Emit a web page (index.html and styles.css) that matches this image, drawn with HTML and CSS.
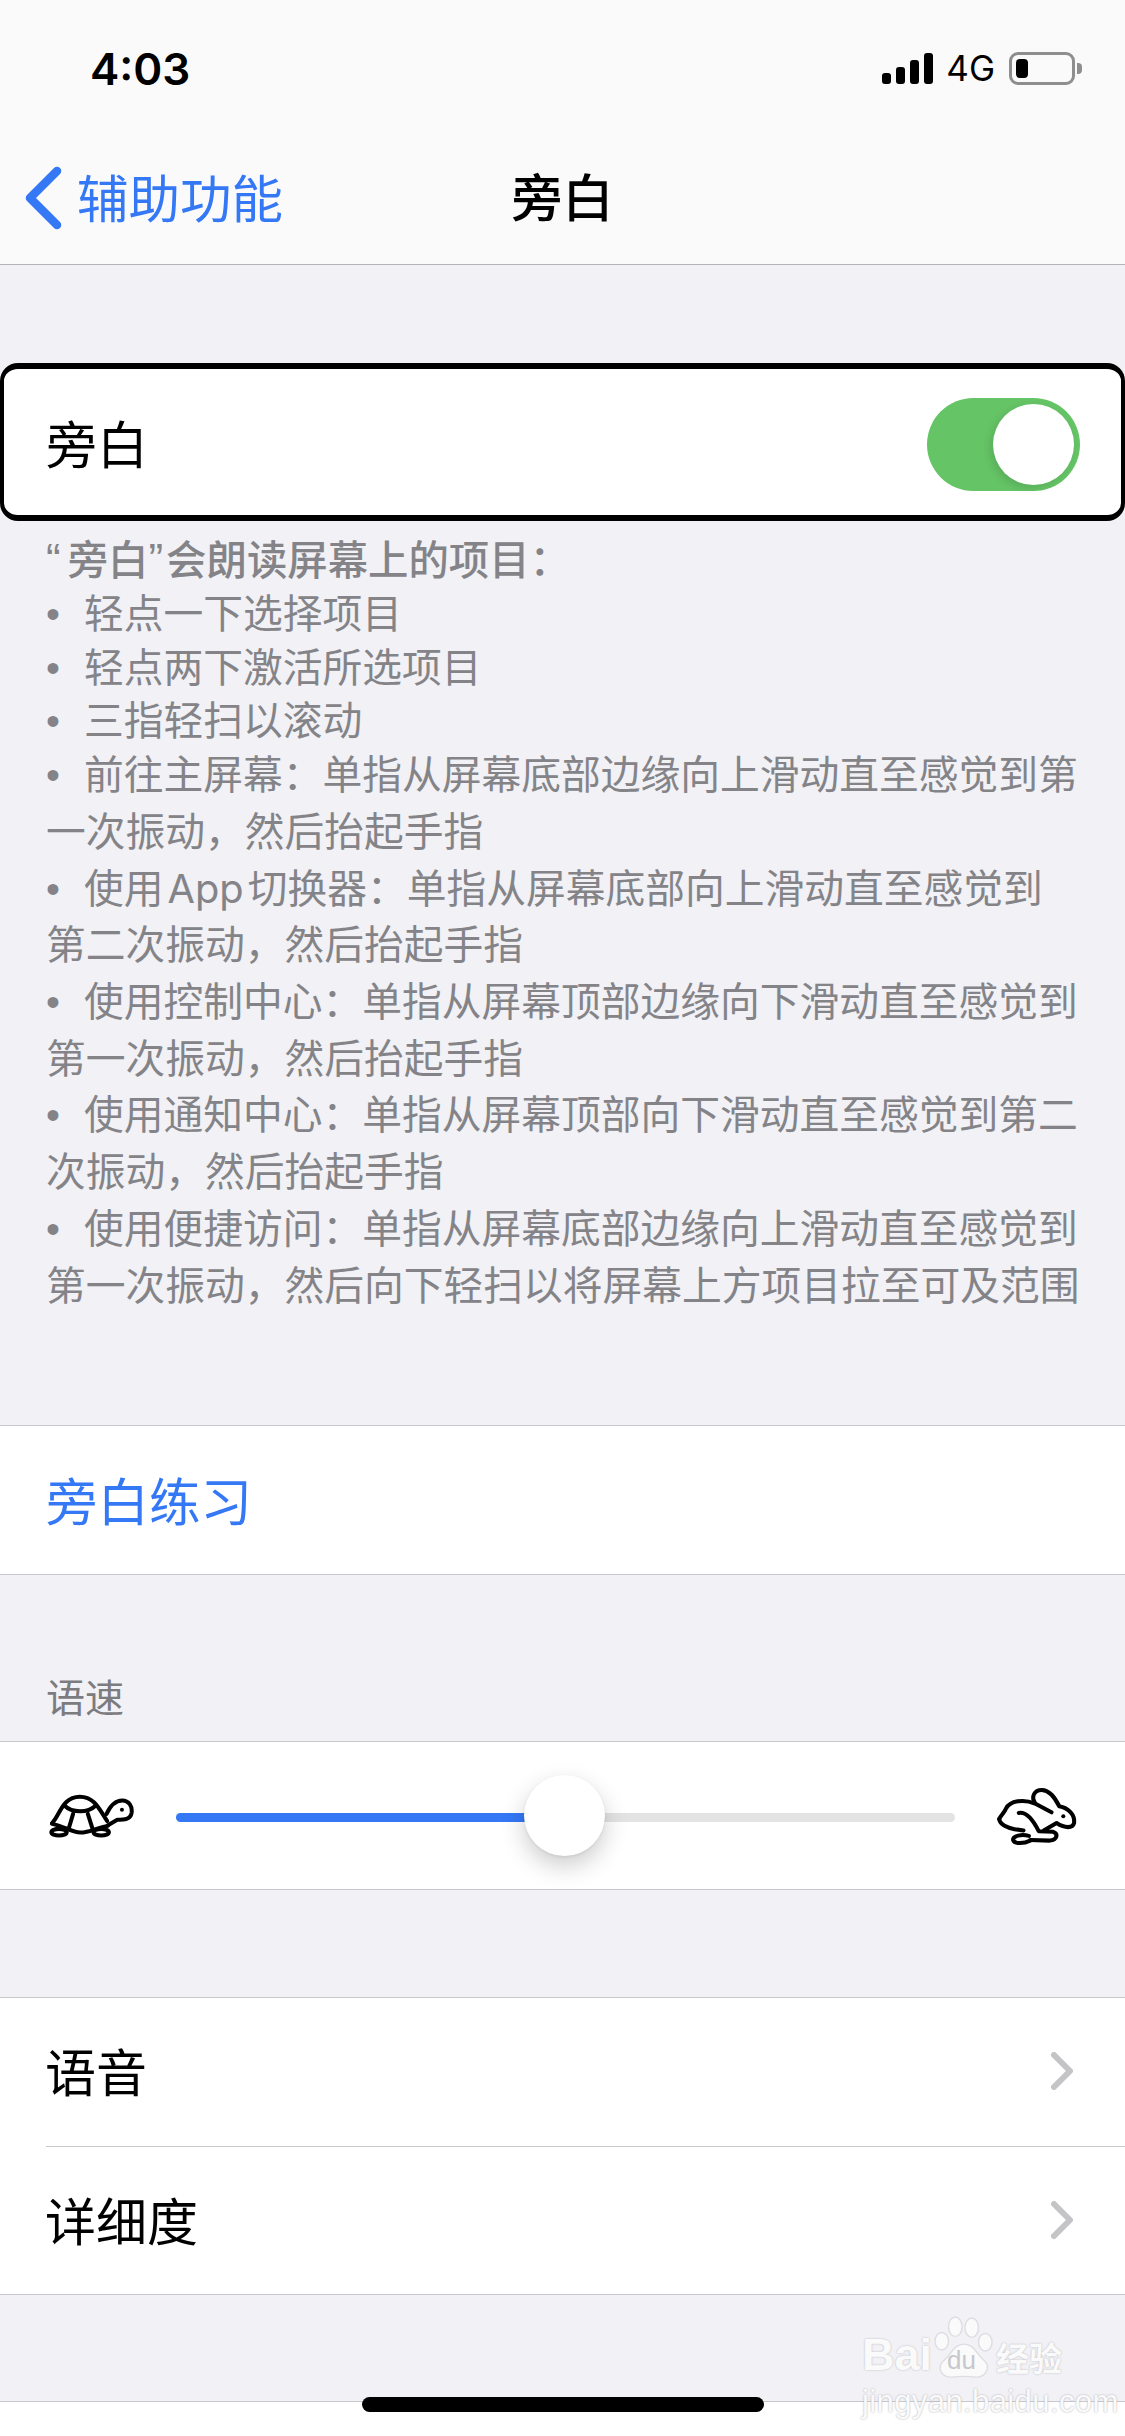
FILE: index.html
```html
<!DOCTYPE html>
<html lang="zh-CN">
<head>
<meta charset="UTF-8" />
<meta name="viewport" content="width=device-width, initial-scale=1.0" />
<title>旁白</title>
<link rel="stylesheet" href="styles.css">
</head>
<body>
<div id="screen">
  <div id="top-bar">
    <div id="status-bar">
      <span id="clock">4:03</span>
      <div id="status-icons">
        <svg id="signal" width="51" height="31" viewBox="0 0 51 31">
          <rect x="0" y="20" width="9" height="11" rx="3" />
          <rect x="14" y="14" width="9" height="17" rx="3" />
          <rect x="28" y="7" width="9" height="24" rx="3" />
          <rect x="42" y="0" width="9" height="31" rx="3" />
        </svg>
        <span id="network">4G</span>
        <div id="battery"><div id="battery-level"></div></div>
        <div id="battery-nub"></div>
      </div>
    </div>
    <div id="nav-bar">
      <div id="nav-back">
        <svg width="38" height="64" viewBox="0 0 38 64"><path d="M33 5 L6 32 L33 59" fill="none" stroke="#3478f6" stroke-width="8.5" stroke-linecap="round" stroke-linejoin="round" /></svg>
        <span>辅助功能</span>
      </div>
      <div id="nav-title">旁白</div>
    </div>
  </div>

  <div id="voice-row">
    <span>旁白</span>
    <div id="switch"><div id="switch-knob"></div></div>
  </div>

  <div id="desc">
    <p class="desc-head"><span class="quote quote-open">“</span>旁白<span class="quote quote-close">”</span>会朗读屏幕上的项目：</p>
    <p class="desc-line"><i>•</i>轻点一下选择项目</p>
    <p class="desc-line"><i>•</i>轻点两下激活所选项目</p>
    <p class="desc-line"><i>•</i>三指轻扫以滚动</p>
    <p class="desc-wrap"><i>•</i>前往主屏幕：单指从屏幕底部边缘向上滑动直至感觉到第<br>一次振动，然后抬起手指</p>
    <p class="desc-wrap"><i>•</i>使用<span class="latin">App</span>切换器：单指从屏幕底部向上滑动直至感觉到<br>第二次振动，然后抬起手指</p>
    <p class="desc-wrap"><i>•</i>使用控制中心：单指从屏幕顶部边缘向下滑动直至感觉到<br>第一次振动，然后抬起手指</p>
    <p class="desc-wrap"><i>•</i>使用通知中心：单指从屏幕顶部向下滑动直至感觉到第二<br>次振动，然后抬起手指</p>
    <p class="desc-wrap"><i>•</i>使用便捷访问：单指从屏幕底部边缘向上滑动直至感觉到<br>第一次振动，然后向下轻扫以将屏幕上方项目拉至可及范围</p>
  </div>

  <div id="practice-row" class="group">旁白练习</div>

  <div id="speed-label">语速</div>
  <div id="speed-row" class="group">
    <svg id="turtle" width="85" height="45" viewBox="146 163 254 134" fill="none" stroke="#000" stroke-width="12" stroke-linecap="round" stroke-linejoin="round">
      <path d="M155 250 C178 228 185 171 238 171 C282 171 296 208 320 244" />
      <path d="M155 252 C192 258 212 278 240 278 C270 278 290 262 322 258" />
      <path d="M192 197 C215 220 262 220 286 197" />
      <path d="M218 222 L205 266 M262 222 L276 266" />
      <ellipse cx="176" cy="277" rx="23" ry="10" />
      <ellipse cx="302" cy="277" rx="23" ry="10" />
      <path d="M318 222 C330 196 345 182 365 182 C385 182 395 200 393 218 C390 240 370 240 350 240 L322 256" />
      <circle cx="364" cy="210" r="6" fill="#000" stroke="none" />
    </svg>
    <div id="track">
      <div id="track-fill"></div>
      <div id="thumb"></div>
    </div>
    <svg id="rabbit" width="80" height="58" viewBox="114 86 236 172" fill="none" stroke="#000" stroke-width="12" stroke-linecap="round" stroke-linejoin="round">
      <path d="M120 178 C126 165 135 160 140 147 C152 124 192 118 226 132 L275 158" />
      <path d="M226 130 C214 112 224 92 246 92 C270 92 285 115 298 140 C325 145 345 165 342 190 C338 206 315 206 290 190 L252 212" />
      <path d="M120 178 C122 195 145 205 165 208 L192 212" />
      <path d="M178 160 C205 155 225 190 237 214 L280 216 C296 222 292 240 270 242 L212 240" />
      <path d="M208 228 C186 222 160 228 161 240 C165 254 195 250 212 242" />
      <circle cx="310" cy="170" r="6" fill="#000" stroke="none" />
    </svg>
  </div>

  <div id="list" class="group">
    <div class="list-row">
      <span>语音</span>
      <svg width="23" height="38" viewBox="0 0 23 38"><path d="M3 3 L19 19 L3 35" fill="none" stroke="#c4c4c7" stroke-width="6" stroke-linecap="round" stroke-linejoin="round" /></svg>
    </div>
    <div class="list-row">
      <span>详细度</span>
      <svg width="23" height="38" viewBox="0 0 23 38"><path d="M3 3 L19 19 L3 35" fill="none" stroke="#c4c4c7" stroke-width="6" stroke-linecap="round" stroke-linejoin="round" /></svg>
    </div>
  </div>

  <div id="bottom-strip"></div>
  <div id="home-bar"></div>

  <div id="watermark">
    <div id="wm-logo">
      <span>Bai</span>
      <div id="wm-paw">
        <svg width="60" height="64" viewBox="0 0 62 66" fill="#fafafb" stroke="#dedee2" stroke-width="1.5">
          <ellipse cx="8" cy="26" rx="7" ry="9" />
          <ellipse cx="22" cy="11" rx="7" ry="10" />
          <ellipse cx="39" cy="12" rx="7" ry="10" />
          <ellipse cx="53" cy="27" rx="7" ry="9" />
          <path d="M31 29 C42 29 44 40 52 46 C60 54 52 64 42 63 C34 62 28 62 20 63 C8 64 2 54 10 46 C18 40 20 29 31 29 Z" />
        </svg>
        <b>du</b>
      </div>
      <span id="wm-cn">经验</span>
    </div>
    <div id="wm-url">jingyan.baidu.com</div>
  </div>
</div>
</body>
</html>
```
FILE: styles.css
```css
* {
  box-sizing: border-box;
}

body {
  margin: 0;
  background: #f1f1f6;
  font-family: "Noto Sans CJK SC", "Noto Sans", sans-serif;
}

#screen {
  position: relative;
  width: 1125px;
  height: 2436px;
  overflow: hidden;
  display: flex;
  flex-direction: column;
}

#top-bar {
  height: 265px;
  background: #fafafb;
  border-bottom: 1px solid #b4b4b6;
}

#status-bar {
  height: 132px;
  display: flex;
  justify-content: space-between;
  align-items: flex-start;
  padding: 42px 43px 0 90px;
}

#clock {
  font-family: Inter, "Liberation Sans", sans-serif;
  font-size: 44px;
  font-weight: 600;
  line-height: 54px;
  color: #000;
}

#status-icons {
  display: flex;
  align-items: center;
  margin-top: 10px;
}

#signal {
  fill: #000;
  margin-right: -1px;
}

#network {
  font-family: Inter, "Liberation Sans", sans-serif;
  font-size: 35px;
  line-height: 33px;
  margin: 0 14px;
  color: #000;
}

#battery {
  width: 66px;
  height: 33px;
  padding: 4px;
  border: 3px solid #8e8e8e;
  border-radius: 9px;
}

#battery-level {
  width: 12px;
  height: 100%;
  background: #000;
  border-radius: 4px;
}

#battery-nub {
  width: 5px;
  height: 11px;
  margin-left: 2px;
  background: #8e8e8e;
  border-radius: 0 4px 4px 0;
}

#nav-bar {
  position: relative;
  height: 132px;
  display: flex;
  align-items: center;
  justify-content: center;
}

#nav-back {
  position: absolute;
  left: 24px;
  top: 34px;
  display: flex;
  align-items: center;
  gap: 15px;
  color: #3478f6;
  font-size: 51.5px;
  line-height: 64px;
}

#nav-back span {
  margin-top: -4px;
}

#nav-title {
  font-size: 51px;
  font-weight: 500;
  color: #000;
  margin-top: -7px;
}

#voice-row {
  height: 158px;
  margin-top: 98px;
  padding: 0 41px 0 42px;
  display: flex;
  align-items: center;
  justify-content: space-between;
  background: #fff;
  border: solid #000;
  border-width: 6px 4px;
  border-radius: 18px;
  font-size: 51px;
  color: #000;
}

#switch {
  width: 153px;
  height: 93px;
  margin-top: 4px;
  padding: 6px;
  display: flex;
  justify-content: flex-end;
  background: #65c466;
  border-radius: 47px;
}

#switch-knob {
  width: 81px;
  height: 81px;
  background: #fff;
  border-radius: 50%;
  box-shadow: -3px 3px 8px rgba(0, 0, 0, 0.12);
}

#desc {
  height: 904px;
  padding: 10px 0 0 46px;
  font-size: 39.75px;
  color: #848488;
  white-space: nowrap;
}

#desc p {
  margin: 0;
}

#desc i {
  display: inline-block;
  width: 38px;
  font-family: "Liberation Sans", sans-serif;
  font-style: normal;
  line-height: 1;
}

.desc-head {
  font-size: 40.4px;
  line-height: 53.3px;
  font-weight: 500;
}

.quote {
  font-family: "Liberation Sans", sans-serif;
  font-size: 44px;
  line-height: 1;
}

.quote-open {
  margin-right: 7px;
}

.quote-close {
  margin-right: 3px;
}

.latin {
  font-family: Inter, "Liberation Sans", sans-serif;
  line-height: 1;
  margin: 0 4px;
}

.desc-line {
  line-height: 53.3px;
}

.desc-wrap {
  line-height: 56.7px;
}

.group {
  background: #fff;
  border-top: 1px solid #c8c8cc;
  border-bottom: 1px solid #c8c8cc;
}

#practice-row {
  height: 150px;
  padding-left: 46px;
  font-size: 51.5px;
  line-height: 145px;
  color: #3478f6;
}

#speed-label {
  height: 166px;
  padding: 92px 0 0 46px;
  font-size: 39px;
  line-height: 56px;
  color: #7b7b80;
}

#speed-row {
  height: 149px;
  padding-left: 49px;
  display: flex;
  align-items: center;
}

#turtle {
  margin-top: 2px;
}

#track {
  position: relative;
  width: 779px;
  height: 9px;
  margin: 4px 43px 0 42px;
  background: #e3e3e3;
  border-radius: 5px;
}

#track-fill {
  width: 350px;
  height: 100%;
  background: #3478f6;
  border-radius: 5px 0 0 5px;
}

#thumb {
  position: absolute;
  left: 348px;
  top: -38px;
  width: 81px;
  height: 81px;
  background: #fff;
  border-radius: 50%;
  box-shadow: 0 10px 24px rgba(0, 0, 0, 0.2), 0 1px 3px rgba(0, 0, 0, 0.08);
}

#rabbit {
  margin-top: 3px;
  margin-left: -1px;
}

#list {
  height: 298px;
  margin-top: 107px;
  padding-left: 46px;
}

.list-row {
  height: 148px;
  display: flex;
  align-items: center;
  justify-content: space-between;
  padding-right: 51px;
  padding-bottom: 5px;
  font-size: 51px;
  color: #000;
}

.list-row span {
  margin-left: -1px;
}

.list-row svg {
  margin-top: 2px;
}

.list-row + .list-row {
  border-top: 1px solid #c8c8cc;
  padding-bottom: 3px;
}

#bottom-strip {
  height: 35px;
  margin-top: 106px;
  background: #fff;
  border-top: 1px solid #c8c8cc;
}

#home-bar {
  position: absolute;
  left: 362px;
  top: 2397px;
  width: 402px;
  height: 15px;
  background: #000;
  border-radius: 8px;
}

#watermark {
  position: absolute;
  left: 862px;
  top: 2316px;
  color: #fafafb;
  font-family: "Liberation Sans", sans-serif;
}

#wm-logo {
  display: flex;
  align-items: flex-end;
  height: 64px;
  font-size: 45px;
  font-weight: 700;
  line-height: 50px;
  text-shadow: 0 0 2px #b4b4b8;
}

#wm-paw {
  position: relative;
  width: 60px;
  height: 64px;
  margin: 0 2px;
  flex: none;
}

#wm-paw b {
  position: absolute;
  left: 13px;
  bottom: 6px;
  font-size: 26px;
  line-height: 28px;
  font-weight: 400;
  color: #c8c8cc;
  text-shadow: none;
}

#wm-cn {
  font-family: "Noto Sans CJK SC", sans-serif;
  font-size: 33px;
  line-height: 46px;
}

#wm-url {
  margin-top: 6px;
  font-size: 31px;
  line-height: 32px;
  letter-spacing: 0.4px;
  text-shadow: 0 0 2px #a8a8ac;
}
```
